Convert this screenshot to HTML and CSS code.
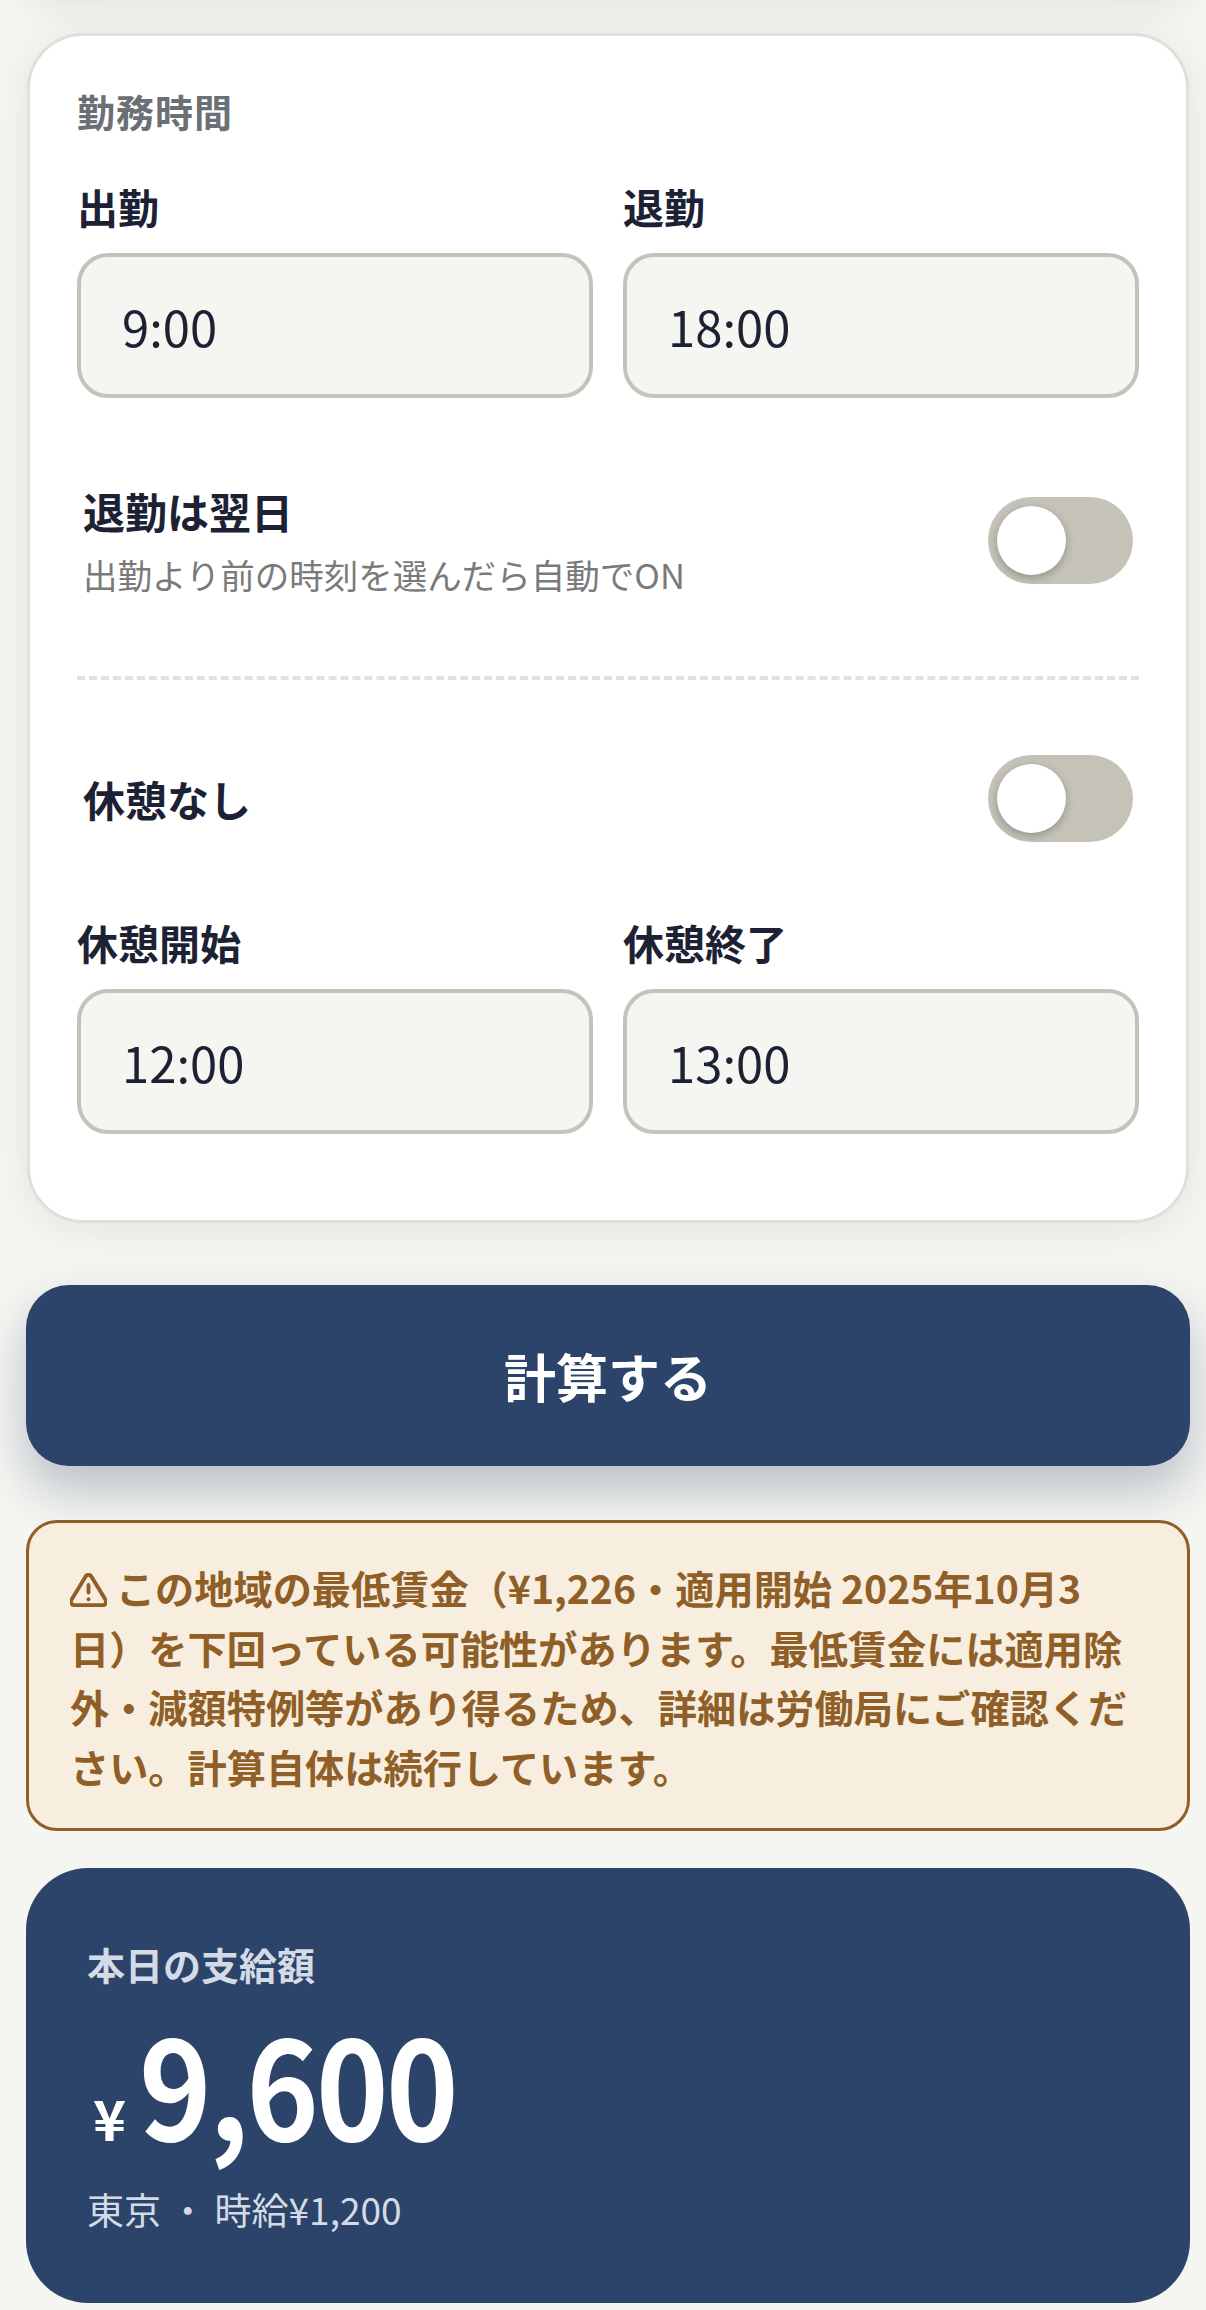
FILE: index.html
```html
<!DOCTYPE html>
<html lang="ja">
<head>
<meta charset="utf-8">
<title>勤務時間</title>
<link rel="stylesheet" href="styles.css">
</head>
<body>
<main class="page">
  <div class="prev-card"></div>
  <section class="card">
    <h2 class="section-title">勤務時間</h2>
    <div class="time-grid">
      <div class="field"><div class="field-label">出勤</div><div class="time-input">9:00</div></div>
      <div class="field"><div class="field-label">退勤</div><div class="time-input">18:00</div></div>
    </div>
    <div class="toggle-row first">
      <div><div class="toggle-label">退勤は翌日</div><div class="toggle-sub">出勤より前の時刻を選んだら自動でON</div></div>
      <span class="toggle"><span class="knob"></span></span>
    </div>
    <hr class="dash">
    <div class="toggle-row second">
      <div class="toggle-label">休憩なし</div>
      <span class="toggle"><span class="knob"></span></span>
    </div>
    <div class="time-grid">
      <div class="field"><div class="field-label">休憩開始</div><div class="time-input">12:00</div></div>
      <div class="field"><div class="field-label">休憩終了</div><div class="time-input">13:00</div></div>
    </div>
  </section>
  <button class="calc">計算する</button>
  <div class="alert"><svg class="warn" viewBox="1 2 22 20" fill="none" stroke="currentColor" stroke-width="2.3" stroke-linecap="round" stroke-linejoin="round"><path d="M10.3 3.9 1.8 18a2 2 0 0 0 1.7 3h17a2 2 0 0 0 1.7-3L13.7 3.9a2 2 0 0 0-3.4 0z"/><path d="M12 9v4.5"/><path d="M12 17.5h.01"/></svg> この地域の最低賃金（¥1,226・適用開始 2025年10月3日）を下回っている可能性があります。最低賃金には適用除外・減額特例等があり得るため、詳細は労働局にご確認ください。計算自体は続行しています。</div>
  <section class="result">
    <div class="result-label">本日の支給額</div>
    <div class="amount"><span class="yen">¥</span><span class="num">9,600</span></div>
    <div class="result-sub">東京 ・ 時給¥1,200</div>
  </section>
</main>
</body>
</html>
```
FILE: styles.css
```css
* { box-sizing: border-box; }
html, body { margin: 0; padding: 0; }
body {
  background: #f5f5f1;
  font-family: "Noto Sans CJK JP", "Noto Sans", sans-serif;
  color: #1c2233;
  overflow: hidden;
}
.page { height: 2310px; padding: 0 16px 0 26px; overflow: hidden; }
.prev-card {
  height: 60px;
  margin: -66px 1px 39px 1px;
  border-radius: 56px;
  background: #fff;
  box-shadow: 0 12px 40px rgba(28, 34, 51, .09);
}
.card {
  width: 1162px;
  margin-left: 1px;
  height: 1190px;
  padding: 0 47px;
  background: #fff;
  border: 3px solid #e0dfd8;
  border-radius: 56px;
  box-shadow: 0 6px 40px rgba(28, 34, 51, .08);
}
.section-title { margin: 47px 0 0; font-size: 38px; line-height: 56px; font-weight: 600; color: #6b6f76; letter-spacing: 1px; }
.time-grid { display: grid; grid-template-columns: 516px 516px; column-gap: 30px; }
.section-title + .time-grid { margin-top: 38px; }
.field-label { font-size: 41px; line-height: 58px; font-weight: 600; color: #1c2233; }
.time-input {
  margin-top: 18px;
  height: 145px;
  padding: 0 41px;
  display: flex;
  align-items: center;
  background: #f5f5f1;
  border: 4px solid #c5c3b8;
  border-radius: 31px;
  font-size: 49px;
}
.toggle-row { display: flex; justify-content: space-between; align-items: center; padding: 0 6px; }
.toggle-row.first { margin-top: 83px; }
.toggle-row.second { margin-top: 75px; margin-bottom: 71px; }
.toggle-label { font-size: 42px; line-height: 60px; font-weight: 600; color: #1c2233; }
.toggle-sub { font-size: 34.5px; line-height: 50px; margin-top: 8px; color: #7a7a7a; }
.toggle { display: block; width: 145px; height: 87px; padding: 9px; background: #c5c3b8; border-radius: 44px; flex: none; }
.knob { display: block; width: 69px; height: 69px; background: #fff; border-radius: 50%; box-shadow: 0 3px 9px rgba(0, 0, 0, .25); }
.dash { margin: 77px 0 0; border: 0; border-top: 4px dashed #e2e1da; }
.calc {
  display: block;
  width: 1164px;
  height: 181px;
  margin-top: 62px;
  border: 0;
  border-radius: 43px;
  background: #2c4469;
  color: #fff;
  font: 700 52px "Noto Sans CJK JP", sans-serif;
  box-shadow: 0 24px 48px rgba(44, 68, 105, .3);
}
.alert {
  width: 1164px;
  margin-top: 54px;
  padding: 35px 56px 32px 41px;
  background: #f7eedf;
  border: 3px solid #8f5f27;
  border-radius: 31px;
  color: #8f5f27;
  font-size: 39.2px;
  line-height: 59.6px;
  font-weight: 600;
}
.warn { width: 37px; height: 34px; vertical-align: -3px; }
.result {
  width: 1164px;
  height: 435px;
  margin-top: 37px;
  padding: 71px 61px 0;
  background: #2c4469;
  border-radius: 62px;
  color: #d5dbe6;
}
.result-label { font-size: 38px; line-height: 50px; font-weight: 600; }
.amount { display: flex; align-items: baseline; margin-top: 16px; color: #fff; font-weight: 700; height: 154px; line-height: 154px; }
.yen { font-size: 56px; margin: 0 13px 0 6px; }
.num { display: inline-block; font-size: 136px; letter-spacing: -3px; transform: scaleX(.905); transform-origin: left center; }
.result-sub { font-size: 37px; line-height: 50px; margin-top: 25px; }
```
